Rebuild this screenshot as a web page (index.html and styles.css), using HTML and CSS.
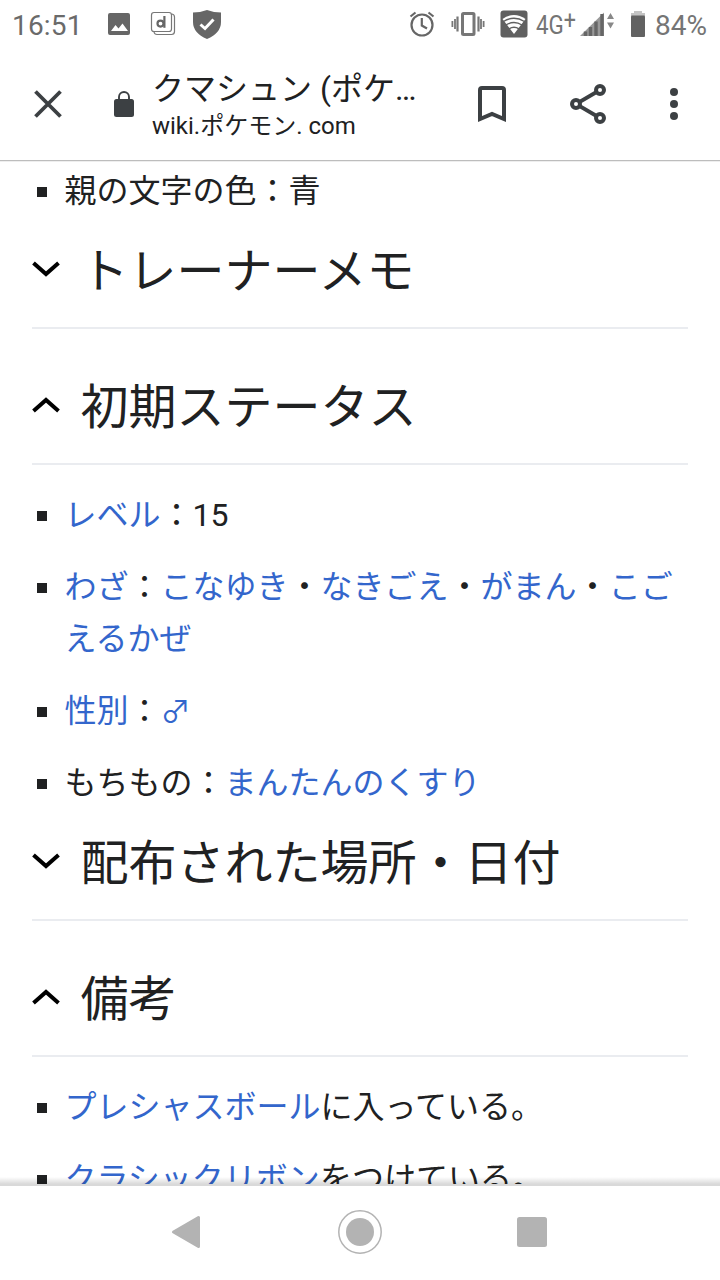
FILE: index.html
```html
<!DOCTYPE html>
<html lang="ja">
<head>
  <meta charset="UTF-8">
  <meta name="viewport" content="width=device-width, initial-scale=1.0">
  <title>クマシュン (ポケモン)</title>
  <link rel="stylesheet" href="styles.css">
</head>
<body>
  <!-- Status bar -->
  <div class="status">
    <span class="clock">16:51</span>
    <svg class="status-left" width="116" height="50" viewBox="106 0 116 50">
      <path fill="#666" fill-rule="evenodd" d="M110 13h18q2 0 2 2v18q0 2-2 2h-18q-2 0-2-2V15q0-2 2-2zM111 31h17l-5.500-7.500-4 5-3-3.500z"/>
      <g fill="none" stroke="#777" stroke-width="1.200">
        <rect x="151.500" y="12.500" width="20" height="19" rx="2.500"/>
        <path d="M154 32q.5 2.500 3 2.500h14.500q3 0 3-3V17q0-2.500-2.500-3"/>
      </g>
      <circle cx="160.500" cy="23.600" r="3" fill="none" stroke="#666" stroke-width="2.200"/>
      <path d="M164.400 16v11.800" stroke="#666" stroke-width="2.200"/>
      <path fill="#666" d="M207 10q7 2.500 14 2.500V22q0 11-14 17-14-6-14-17v-9.500q7 0 14-2.500z"/>
      <path d="M200.500 24.500l4.500 4 8.500-9" fill="none" stroke="#fff" stroke-width="3"/>
    </svg>
    <svg class="status-mid" width="120" height="50" viewBox="408 0 120 50">
      <g fill="none" stroke="#666" stroke-width="2.200">
        <circle cx="422" cy="25" r="10.500"/>
        <path d="M421.800 18v7.500l5.200 3M410.500 16.500l5-4M433.500 16.500l-5-4"/>
      </g>
      <g fill="none" stroke="#777">
        <rect x="462.500" y="13.500" width="11.500" height="21" rx="1" stroke-width="3"/>
        <path stroke-width="2.200" d="M457.500 16.500v15M478.500 16.500v15"/>
        <path stroke-width="1.800" d="M455 19v10M452.400 21v6M481 19v10M483.600 21v6"/>
      </g>
      <rect x="500.500" y="10.500" width="27" height="27" rx="3" fill="#606060"/>
      <path fill="#fff" d="M502.500 19q11.500-8 23 0L514 34z"/>
      <path fill="none" stroke="#606060" stroke-width="1.400" d="M503.500 21.500q10.500-6.500 21 0M506 25q8-5 16 0M509 28.800q5-3 10 0"/>
    </svg>
    <span class="network">4G<sup>+</sup></span>
    <svg class="status-right" width="70" height="50" viewBox="578 0 70 50">
      <path fill="#999" d="M580 36l24-23.500V36z"/>
      <path stroke="#666" stroke-width="3.400" d="M585.500 36v-4.500M590.500 36v-9M596 36V21.500M602 36V14"/>
      <path fill="#888" d="M607 19l3.500-6 3.500 6zM607 22.500h7l-3.500 6z"/>
      <path fill="#c4c4c4" d="M631 15v-2h3v-2h8v2h3v3h-14z"/>
      <rect x="631" y="15.500" width="14" height="21.500" rx="1" fill="#626262"/>
    </svg>
    <span class="battery">84%</span>
  </div>

  <!-- Browser toolbar -->
  <header class="toolbar">
    <svg class="icon-close" width="30" height="30" viewBox="0 0 30 30">
      <path d="M2.500 2.500l25 25M27.500 2.500l-25 25" stroke="#3c4043" stroke-width="3.800"/>
    </svg>
    <svg class="icon-lock" width="20" height="27" viewBox="0 0 20 27">
      <rect y="8" width="20" height="18" rx="2.500" fill="#3c4043"/>
      <path d="M5 9V6a5 5 0 0 1 10 0v3" fill="none" stroke="#3c4043" stroke-width="1.900"/>
    </svg>
    <div class="page">
      <div class="page-title">クマシュン (ポケ…</div>
      <div class="page-host">wiki.ポケモン. com</div>
    </div>
    <svg class="icon-bookmark" width="28" height="36" viewBox="0 0 28 36">
      <path d="M2 33V4q0-2 2-2h20q2 0 2 2v29l-12-5z" fill="none" stroke="#3c4043" stroke-width="4"/>
    </svg>
    <svg class="icon-share" width="36" height="40" viewBox="0 0 36 40">
      <path d="M30 6L6 20l24 14" fill="none" stroke="#3c4043" stroke-width="3.800"/>
      <g fill="#fff" stroke="#3c4043" stroke-width="4">
        <circle cx="6" cy="20" r="4"/>
        <circle cx="30" cy="6" r="4"/>
        <circle cx="30" cy="34" r="4"/>
      </g>
    </svg>
    <svg class="icon-menu" width="8" height="32" viewBox="0 0 8 32" fill="#3c4043">
      <circle cx="4" cy="4" r="4"/>
      <circle cx="4" cy="16" r="4"/>
      <circle cx="4" cy="28" r="4"/>
    </svg>
  </header>

  <!-- Article -->
  <main class="content">
    <ul class="first">
      <li>親の文字の色：青</li>
    </ul>

    <h2>
      <svg width="28" height="16" viewBox="0 0 28 16"><path d="M1.500 2L14 13 26.500 2"/></svg>
      <span>トレーナーメモ</span>
    </h2>

    <h2 class="spaced">
      <svg width="28" height="16" viewBox="0 0 28 16"><path d="M1.500 14L14 3l12.500 11"/></svg>
      <span>初期ステータス</span>
    </h2>
    <ul>
      <li><a>レベル</a>：15</li>
      <li><a>わざ</a>：<a>こなゆき</a>・<a>なきごえ</a>・<a>がまん</a>・<a>こごえるかぜ</a></li>
      <li><a>性別</a>：<a class="gender">♂</a></li>
      <li>もちもの：<a>まんたんのくすり</a></li>
    </ul>

    <h2>
      <svg width="28" height="16" viewBox="0 0 28 16"><path d="M1.500 2L14 13 26.500 2"/></svg>
      <span>配布された場所・日付</span>
    </h2>

    <h2 class="spaced">
      <svg width="28" height="16" viewBox="0 0 28 16"><path d="M1.500 14L14 3l12.500 11"/></svg>
      <span>備考</span>
    </h2>
    <ul>
      <li><a>プレシャスボール</a>に入っている。</li>
      <li><a>クラシックリボン</a>をつけている。</li>
    </ul>
  </main>

  <!-- Navigation bar -->
  <nav class="navbar">
    <svg width="30" height="34" viewBox="0 0 30 34">
      <path d="M2.500 17L27.500 2.500v29z" fill="#b3b3b3" stroke="#b3b3b3" stroke-width="3" stroke-linejoin="round"/>
    </svg>
    <svg class="home" width="44" height="44" viewBox="0 0 44 44">
      <circle cx="22" cy="22" r="21.200" fill="none" stroke="#b3b3b3" stroke-width="1.500"/>
      <circle cx="22" cy="22" r="14" fill="#b3b3b3"/>
    </svg>
    <svg width="30" height="30" viewBox="0 0 30 30">
      <rect width="30" height="30" rx="2.500" fill="#b3b3b3"/>
    </svg>
  </nav>
</body>
</html>
```
FILE: styles.css
```css
* {
  box-sizing: border-box;
}
body {
  margin: 0;
  width: 720px;
  height: 1280px;
  display: flex;
  flex-direction: column;
  overflow: hidden;
  background: #fff;
  color: #202122;
  font-family: Roboto, "Noto Sans CJK JP", sans-serif;
}
svg {
  display: block;
  flex: none;
}

/* Status bar */
.status {
  display: flex;
  align-items: center;
  height: 50px;
  padding-left: 12px;
  color: #757575;
  font-size: 28px;
  line-height: 50px;
  white-space: nowrap;
}
.clock {
  width: 94px;
  padding-top: 2px;
  color: #6a6a6a;
  letter-spacing: 0.2px;
}
.status-mid {
  margin-left: 186px;
}
.network {
  width: 42px;
  margin-left: 8px;
  font-size: 26px;
  transform: scaleX(0.86);
  transform-origin: left;
}
.network sup {
  font-size: 25px;
  line-height: 0;
  vertical-align: 5px;
}
.battery {
  padding-top: 2px;
  margin-left: 7px;
  font-size: 28px;
}

/* Toolbar */
.toolbar {
  display: flex;
  align-items: center;
  height: 112px;
  padding: 0 0 3px 33px;
  border-bottom: 1px solid #eee;
  box-shadow: inset 0 -1px #bdbdbd;
}
.icon-lock {
  margin-left: 51px;
}
.page {
  width: 290px;
  margin-left: 18px;
  padding-top: 3px;
  white-space: nowrap;
}
.page-title {
  font-size: 32px;
  line-height: 40px;
}
.page-host {
  font-size: 24px;
  line-height: 34px;
}
.icon-bookmark {
  margin-left: 36px;
}
.icon-share {
  margin-left: 64px;
}
.icon-menu {
  margin-left: 64px;
}

/* Article */
.content {
  position: relative;
  flex: none;
  height: 1024px;
  padding: 0 32px;
  overflow: hidden;
  border-bottom: 2px solid #d9d9d9;
}
.content::after {
  content: "";
  position: absolute;
  left: 0;
  right: 0;
  bottom: 0;
  height: 7px;
  background: linear-gradient(transparent, rgba(0, 0, 0, 0.15));
}
ul {
  margin: 0;
  padding: 24px 0 0 32.5px;
  list-style: none;
}
.first {
  padding-top: 3px;
}
li {
  position: relative;
  margin-bottom: 20px;
  font-size: 32px;
  line-height: 52px;
}
li:last-child {
  margin-bottom: 0;
}
li::before {
  content: "";
  position: absolute;
  left: -27.5px;
  top: 22px;
  width: 10px;
  height: 10px;
  background: #202122;
}
a {
  color: #36c;
}
.gender {
  font-size: 30px;
  line-height: 0;
}
h2 {
  display: flex;
  align-items: center;
  gap: 20.5px;
  height: 112px;
  margin: 0;
  padding-bottom: 6px;
  border-bottom: 2px solid #eaecf0;
  font-size: 48px;
  font-weight: 400;
}
h2 span {
  padding-bottom: 5px;
}
h2.spaced {
  margin-top: 24px;
}
h2 svg {
  fill: none;
  stroke: #000;
  stroke-width: 4;
}

/* Navigation bar */
.navbar {
  display: flex;
  align-items: center;
  flex: 1;
  padding: 0 173px 2px 171px;
  justify-content: space-between;
}
.home {
  margin-left: 2px;
}
```
